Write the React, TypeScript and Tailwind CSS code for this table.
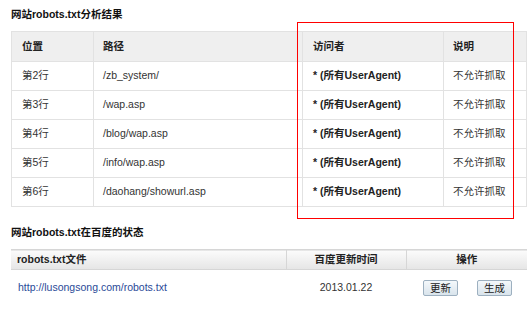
const rules = [
  { line: "第2行", path: "/zb_system/" },
  { line: "第3行", path: "/wap.asp" },
  { line: "第4行", path: "/blog/wap.asp" },
  { line: "第5行", path: "/info/wap.asp" },
  { line: "第6行", path: "/daohang/showurl.asp" },
]

function ActionButton({ label }: { label: string }) {
  return (
    <button className="h-[16px] w-[35px] rounded-[2px] border border-[#9db0c0] bg-gradient-to-b from-[#f4f8fb] to-[#d9e4ec] text-[10.5px] leading-none text-[#222]">
      {label}
    </button>
  )
}

export default function App() {
  return (
    <div className="relative h-[310px] w-[529px] overflow-hidden bg-white pl-[11px] pr-[2px] pt-[7px] font-['Liberation_Sans','Noto_Sans_CJK_SC',sans-serif] text-[10.5px] text-[#333]">
      <h2 className="h-[14px] leading-[14px] font-bold text-[#111]">网站robots.txt分析结果</h2>

      <table className="mt-[10px] w-full border-collapse border border-[#e2e2e2]">
        <thead>
          <tr className="h-[30px] bg-[#efefef] text-left font-bold text-[#222]">
            <th className="w-[82px] border border-[#e2e2e2] pl-[10px]">位置</th>
            <th className="w-[209px] border border-[#e2e2e2] pl-[9px]">路径</th>
            <th className="w-[141px] border border-[#e2e2e2] pl-[10px]">访问者</th>
            <th className="border border-[#e2e2e2] pl-[9px]">说明</th>
          </tr>
        </thead>
        <tbody>
          {rules.map((r) => (
            <tr key={r.line} className="h-[29px]">
              <td className="border border-[#e2e2e2] pl-[10px]">{r.line}</td>
              <td className="border border-[#e2e2e2] pl-[9px]">{r.path}</td>
              <td className="border border-[#e2e2e2] pl-[10px] font-bold text-[#222]">* (所有UserAgent)</td>
              <td className="border border-[#e2e2e2] pl-[9px]">不允许抓取</td>
            </tr>
          ))}
        </tbody>
      </table>

      <h2 className="mt-[18px] h-[14px] leading-[14px] font-bold text-[#111]">网站robots.txt在百度的状态</h2>

      <table className="mt-[10px] w-full border-collapse">
        <thead>
          <tr className="h-[20px] border-y border-[#d6d6d6] bg-gradient-to-b from-[#fbfbfb] to-[#e6e6e6] font-bold text-[#222]">
            <th className="w-[275px] border-r border-[#d6d6d6] pl-[6px] text-left">robots.txt文件</th>
            <th className="w-[120px] border-r border-[#d6d6d6] text-center">百度更新时间</th>
            <th className="text-center">操作</th>
          </tr>
        </thead>
        <tbody>
          <tr className="h-[36px]">
            <td className="pl-[7px] text-[#2a4a97]">http://lusongsong.com/robots.txt</td>
            <td className="text-center">2013.01.22</td>
            <td>
              <div className="flex justify-center gap-[19px] pl-[2px]">
                <ActionButton label="更新" />
                <ActionButton label="生成" />
              </div>
            </td>
          </tr>
        </tbody>
      </table>

      <div className="pointer-events-none absolute left-[297px] top-[22px] h-[197px] w-[217px] border border-[#f00]" />
    </div>
  )
}
